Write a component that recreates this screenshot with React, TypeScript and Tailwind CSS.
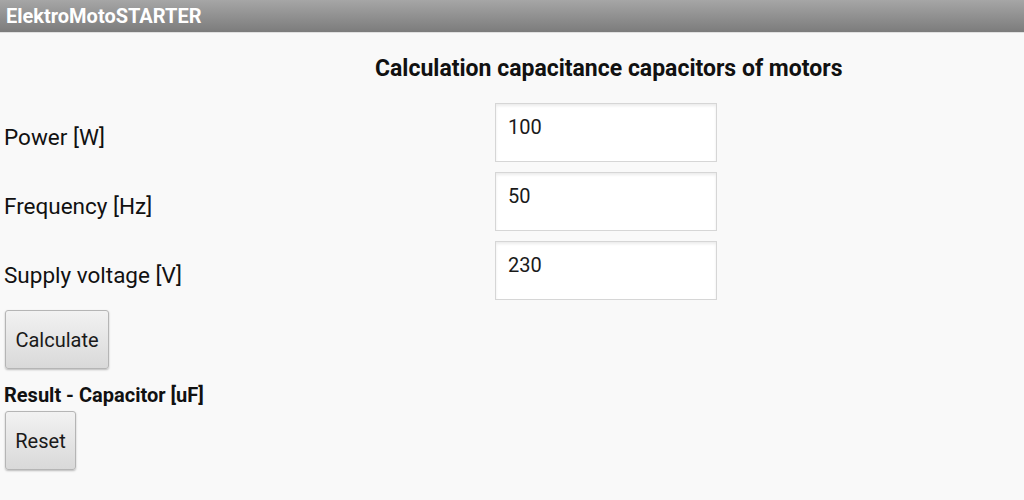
import React from "react";

const font = { fontFamily: "Roboto, 'Noto Sans', sans-serif" };

function Row({ label, value }: { label: string; value: string }) {
  return (
    <div className="flex items-center h-[59px]">
      <div className="w-[495px] pl-[4px] text-[22.5px] leading-[30px] text-[#111] pt-[9px]">{label}</div>
      <div className="w-[222px] h-[59px] bg-white border border-[#d6d6d6] shadow-[inset_0_2px_3px_rgba(0,0,0,0.08)] pl-[12px] pt-[10px] text-[20px] text-[#1a1a1a] leading-[26px]">
        {value}
      </div>
    </div>
  );
}

function Btn({ children, w }: { children: React.ReactNode; w: string }) {
  return (
    <div
      className={`${w} h-[59px] flex items-center justify-center text-[20px] text-[#1a1a1a] rounded-[3px] border border-[#b5b5b5] bg-gradient-to-b from-[#f2f2f2] to-[#d9d9d9] shadow-[0_1px_2px_rgba(0,0,0,0.25)]`}
    >
      {children}
    </div>
  );
}

export default function App() {
  return (
    <div style={font} className="w-[1024px] h-[500px] bg-[#f9f9f9] overflow-hidden">
      <div className="h-[33px] bg-gradient-to-b from-[#a6a6a6] to-[#7c7c7c] border-b border-[#e0e0e0] flex items-center pl-[6px]">
        <span className="text-white font-bold text-[20px] leading-[24px]">ElektroMotoSTARTER</span>
      </div>
      <div className="pl-[375px] pt-[21px] h-[70px] text-[23px] leading-[30px] font-bold text-[#111]">
        Calculation capacitance capacitors of motors
      </div>
      <div className="flex flex-col gap-[10px]">
        <Row label="Power [W]" value="100" />
        <Row label="Frequency [Hz]" value="50" />
        <Row label="Supply voltage [V]" value="230" />
      </div>
      <div className="pl-[5px] pt-[10px]">
        <Btn w="w-[104px]">Calculate</Btn>
      </div>
      <div className="pl-[4px] pt-[16px] text-[20px] font-bold text-[#111] leading-[20px]">
        Result - Capacitor [uF]
      </div>
      <div className="pl-[5px] pt-[6px]">
        <Btn w="w-[71px]">Reset</Btn>
      </div>
    </div>
  );
}
